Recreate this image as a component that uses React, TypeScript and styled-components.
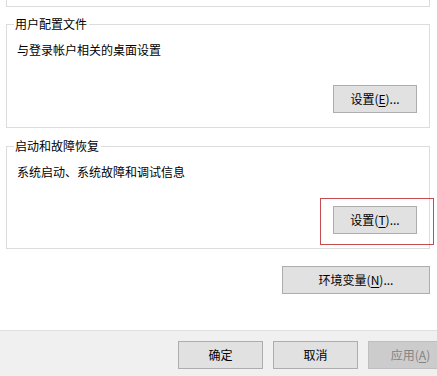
import React from "react";
import styled, { createGlobalStyle } from "styled-components";

const Global = createGlobalStyle`
  html, body { margin: 0; padding: 0; background: #fff; }
  body {
    font-family: "Noto Sans CJK SC", "Microsoft YaHei", sans-serif;
    font-size: 12px;
    color: #000;
  }
  #root { width: 437px; height: 376px; overflow: hidden; }
`;

const Window = styled.div`
  display: flex;
  flex-direction: column;
  width: 437px;
  height: 376px;
`;

const Content = styled.div`
  height: 330px;
  flex: none;
  background: #fff;
  padding-left: 6px;
  box-sizing: border-box;
`;

const Column = styled.div`
  width: 424px;
  display: flex;
  flex-direction: column;
`;

const TopGroupTail = styled.div`
  height: 7px;
  box-sizing: border-box;
  border: 1px solid #dcdcdc;
  border-top: none;
`;

const Group = styled.section<{ $top: number; $height: number }>`
  position: relative;
  box-sizing: border-box;
  height: ${(p) => p.$height}px;
  margin-top: ${(p) => p.$top}px;
  border: 1px solid #dcdcdc;
  display: flex;
  flex-direction: column;
  padding: 17px 12px 14px 10px;
`;

const Legend = styled.span`
  position: absolute;
  top: -9px;
  left: 7px;
  padding: 0 2px 0 1px;
  background: #fff;
  line-height: 16px;
  white-space: nowrap;
`;

const Description = styled.div`
  line-height: 16px;
  white-space: nowrap;
`;

const ButtonSlot = styled.div`
  position: relative;
  margin-top: auto;
  align-self: flex-end;
  display: flex;
`;

const Highlight = styled.div`
  position: absolute;
  top: -8px;
  left: -13px;
  right: -17px;
  bottom: -11px;
  border: 1px solid #c64b50;
  pointer-events: none;
`;

const Button = styled.button<{ $width: number; $disabled?: boolean }>`
  box-sizing: border-box;
  width: ${(p) => p.$width}px;
  height: 28px;
  margin: 0;
  padding: 0;
  border: 1px solid ${(p) => (p.$disabled ? "#bfbfbf" : "#adadad")};
  background: ${(p) => (p.$disabled ? "#cccccc" : "#e1e1e1")};
  color: ${(p) => (p.$disabled ? "#838383" : "#000")};
  font-family: inherit;
  font-size: 12px;
  line-height: 26px;
  text-align: center;
  white-space: nowrap;
  flex: none;
`;

const EnvButtonRow = styled.div`
  margin-top: 17px;
  display: flex;
  justify-content: flex-end;
`;

const BottomBar = styled.div`
  flex: 1;
  background: #f0f0f0;
  border-top: 1px solid #dfdfdf;
  display: flex;
  gap: 10px;
  padding: 10px 0 0 178px;
  overflow: hidden;
`;

const Key = styled.u`
  text-decoration: underline;
  text-underline-offset: 2px;
`;

export default function App() {
  return (
    <>
      <Global />
      <Window>
        <Content>
          <Column>
            <TopGroupTail />
            <Group $top={17} $height={104}>
              <Legend>用户配置文件</Legend>
              <Description>与登录帐户相关的桌面设置</Description>
              <ButtonSlot>
                <Button $width={84}>
                  设置(<Key>E</Key>)...
                </Button>
              </ButtonSlot>
            </Group>
            <Group $top={18} $height={103}>
              <Legend>启动和故障恢复</Legend>
              <Description>系统启动、系统故障和调试信息</Description>
              <ButtonSlot>
                <Highlight />
                <Button $width={84}>
                  设置(<Key>T</Key>)...
                </Button>
              </ButtonSlot>
            </Group>
            <EnvButtonRow>
              <Button $width={148}>
                环境变量(<Key>N</Key>)...
              </Button>
            </EnvButtonRow>
          </Column>
        </Content>
        <BottomBar>
          <Button $width={85}>确定</Button>
          <Button $width={85}>取消</Button>
          <Button $width={85} $disabled>
            应用(<Key>A</Key>)
          </Button>
        </BottomBar>
      </Window>
    </>
  );
}
